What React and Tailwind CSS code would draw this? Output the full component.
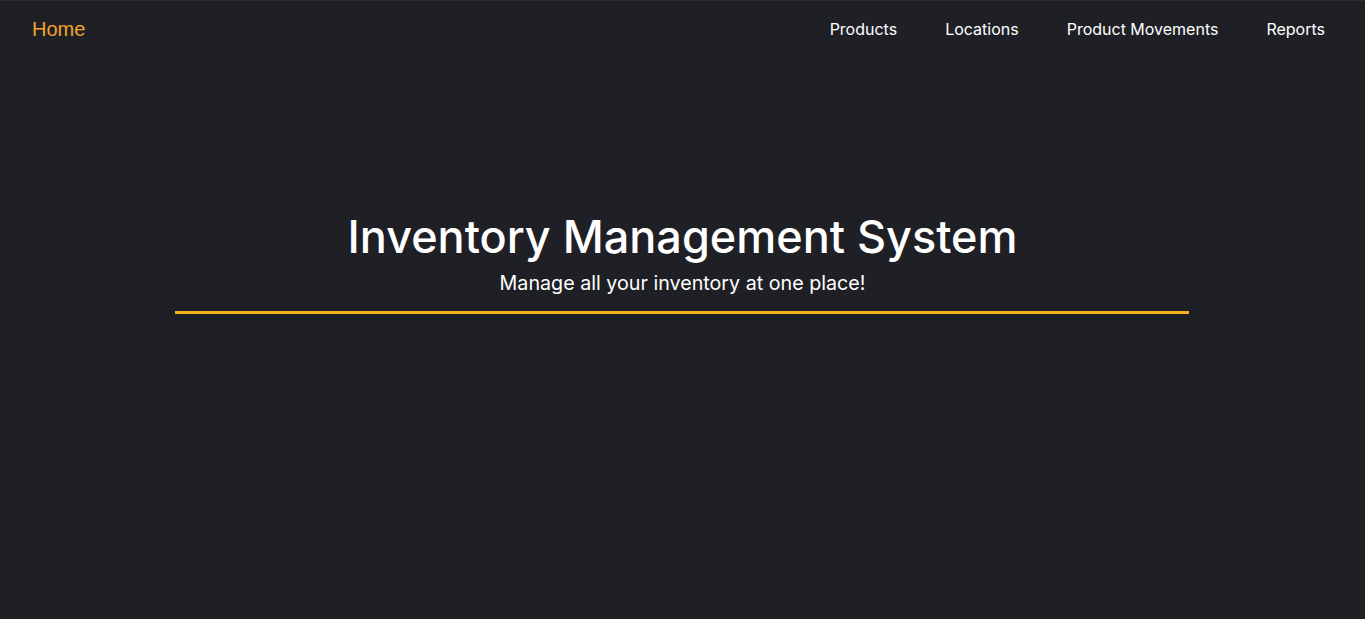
export default function App() {
  const links = ['Products', 'Locations', 'Product Movements', 'Reports']

  return (
    <div className="min-h-screen bg-[#1f2026] border-t border-[#2c2d33] text-white" style={{ fontFamily: 'Inter, "Noto Sans", sans-serif' }}>
      {/* Navbar */}
      <nav className="flex items-center justify-between h-[56px] pl-8 pr-4">
        <a href="#" className="text-[20px] text-[#f2a52a]" style={{ fontFamily: '"Liberation Sans", Arial, sans-serif' }}>
          Home
        </a>
        <ul className="flex items-center">
          {links.map((l) => (
            <li key={l}>
              <a href="#" className="px-6 text-[16px] text-white">{l}</a>
            </li>
          ))}
        </ul>
      </nav>

      {/* Hero */}
      <div className="flex flex-col items-center pt-[152px]">
        <h1 className="text-[45px] font-medium leading-[56px]">Inventory Management System</h1>
        <p className="text-[19.7px] leading-[28px] mt-[4px]">Manage all your inventory at one place!</p>
        <div className="w-[1014px] h-[3px] bg-[#f5b221] mt-[14px] -translate-x-px" />
      </div>
    </div>
  )
}
